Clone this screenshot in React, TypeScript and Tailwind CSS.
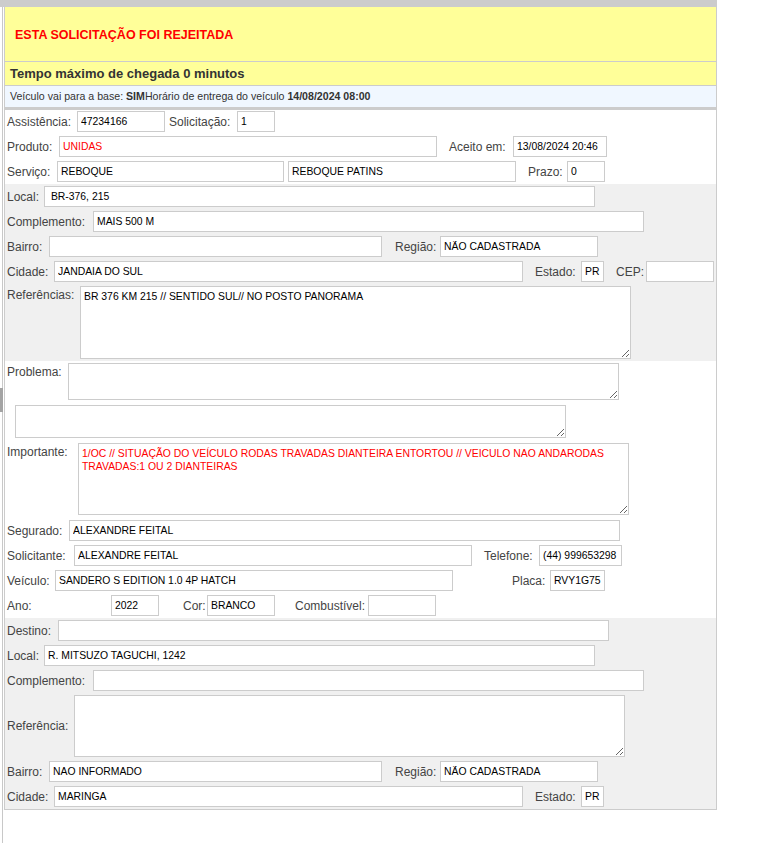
import React from 'react';

// campo de texto somente leitura, no estilo do formulário antigo
function Campo({ w, value = '', red = false }: { w: string; value?: string; red?: boolean }) {
  return (
    <input
      readOnly
      defaultValue={value}
      className={`${w} h-[21px] shrink-0 border border-[#cccccc] bg-white px-[3px] text-[10.4px] outline-none ${red ? 'text-[#ff0000]' : 'text-black'}`}
    />
  );
}

function Area({ w, h, value = '', red = false }: { w: string; h: string; value?: string; red?: boolean }) {
  return (
    <textarea
      readOnly
      defaultValue={value}
      className={`${w} ${h} shrink-0 border border-[#cccccc] bg-white px-[3px] pt-[3px] text-[10.4px] leading-[13px] outline-none ${red ? 'text-[#ff0000]' : 'text-black'}`}
    />
  );
}

function Rotulo({ w, children }: { w: string; children: React.ReactNode }) {
  return <span className={`${w} shrink-0 whitespace-nowrap text-[12px] text-[#444444]`}>{children}</span>;
}

export default function App() {
  return (
    <div className="relative flex min-h-screen flex-col bg-white font-['Liberation_Sans',Arial,sans-serif]">
      <div className="h-[7px] w-[717px] bg-[#cccccc]" />
      <div className="flex flex-1 items-start">
        <div className="flex w-[4px] self-stretch">
          <div className="ml-[2px] w-[1px] bg-[#c8c8c8]" />
        </div>
        <div className="absolute left-0 top-[388px] h-[24px] w-[3px] bg-[#a3a3a3]" />

        <div className="w-[713px] border-x border-b border-[#cccccc]">
          {/* aviso */}
          <div className="flex h-[55px] items-center border-b border-[#cccccc] bg-[#ffff99] pl-[10px] pt-[2px]">
            <span className="text-[12.5px] font-bold text-[#ff0000]">ESTA SOLICITAÇÃO FOI REJEITADA</span>
          </div>
          <div className="flex h-[24px] items-center border-b border-[#cccccc] bg-[#ffff99] pl-[5px]">
            <span className="text-[13px] font-bold text-[#333333]">Tempo máximo de chegada 0 minutos</span>
          </div>
          <div className="flex h-[24px] items-center border-b-[3px] border-[#cccccc] bg-[#f0f7ff] pl-[5px] text-[10.6px] text-[#333333]">
            <span>
              Veículo vai para a base: <b>SIM</b>Horário de entrega do veículo <b>14/08/2024 08:00</b>
            </span>
          </div>

          {/* dados da solicitação */}
          <div className="flex flex-col gap-[4px] pb-[2px] pl-[2px] pt-[1px]">
            <div className="flex h-[21px] items-center">
              <Rotulo w="w-[70px]">Assistência:</Rotulo>
              <Campo w="w-[88px]" value="47234166" />
              <Rotulo w="w-[72px] pl-[4px]">Solicitação:</Rotulo>
              <Campo w="w-[38px]" value="1" />
            </div>
            <div className="flex h-[21px] items-center">
              <Rotulo w="w-[52px]">Produto:</Rotulo>
              <Campo w="w-[378px]" value="UNIDAS" red />
              <Rotulo w="w-[76px] pl-[12px]">Aceito em:</Rotulo>
              <Campo w="w-[94px]" value="13/08/2024 20:46" />
            </div>
            <div className="flex h-[21px] items-center">
              <Rotulo w="w-[50px]">Serviço:</Rotulo>
              <Campo w="w-[227px]" value="REBOQUE" />
              <div className="w-[4px] shrink-0" />
              <Campo w="w-[228px]" value="REBOQUE PATINS" />
              <Rotulo w="w-[51px] pl-[12px]">Prazo:</Rotulo>
              <Campo w="w-[38px]" value="0" />
            </div>
          </div>

          {/* origem */}
          <div className="flex flex-col gap-[4px] bg-[#f0f0f0] py-[2px] pl-[2px]">
            <div className="flex h-[21px] items-center">
              <Rotulo w="w-[37px]">Local:</Rotulo>
              <Campo w="w-[551px]" value=" BR-376, 215" />
            </div>
            <div className="flex h-[21px] items-center">
              <Rotulo w="w-[86px]">Complemento:</Rotulo>
              <Campo w="w-[551px]" value="MAIS 500 M" />
            </div>
            <div className="flex h-[21px] items-center">
              <Rotulo w="w-[42px]">Bairro:</Rotulo>
              <Campo w="w-[333px]" />
              <Rotulo w="w-[58px] pl-[13px]">Região:</Rotulo>
              <Campo w="w-[158px]" value="NÃO CADASTRADA" />
            </div>
            <div className="flex h-[21px] items-center">
              <Rotulo w="w-[47px]">Cidade:</Rotulo>
              <Campo w="w-[469px]" value="JANDAIA DO SUL" />
              <Rotulo w="w-[58px] pl-[12px]">Estado:</Rotulo>
              <Campo w="w-[23px]" value="PR" />
              <Rotulo w="w-[42px] pl-[12px]">CEP:</Rotulo>
              <Campo w="w-[68px]" />
            </div>
            <div className="flex h-[73px] items-start">
              <Rotulo w="w-[73px]">Referências:</Rotulo>
              <Area w="w-[551px]" h="h-[73px]" value="BR 376 KM 215 // SENTIDO SUL// NO POSTO PANORAMA" />
            </div>
          </div>

          {/* problema / segurado / veículo */}
          <div className="flex flex-col gap-[4px] pb-[2px] pl-[2px] pt-[2px]">
            <div className="flex h-[38px] items-start">
              <Rotulo w="w-[61px]">Problema:</Rotulo>
              <Area w="w-[551px]" h="h-[37px]" />
            </div>
            <div className="flex h-[34px] items-start pl-[8px]">
              <Area w="w-[551px]" h="h-[33px]" />
            </div>
            <div className="flex h-[73px] items-start">
              <Rotulo w="w-[71px]">Importante:</Rotulo>
              <Area
                w="w-[551px]"
                h="h-[72px]"
                red
                value={'1/OC // SITUAÇÃO DO VEÍCULO RODAS TRAVADAS DIANTEIRA ENTORTOU // VEICULO NAO ANDARODAS\nTRAVADAS:1 OU 2 DIANTEIRAS'}
              />
            </div>
            <div className="flex h-[21px] items-center">
              <Rotulo w="w-[62px]">Segurado:</Rotulo>
              <Campo w="w-[551px]" value="ALEXANDRE FEITAL" />
            </div>
            <div className="flex h-[21px] items-center">
              <Rotulo w="w-[67px]">Solicitante:</Rotulo>
              <Campo w="w-[398px]" value="ALEXANDRE FEITAL" />
              <Rotulo w="w-[67px] pl-[12px]">Telefone:</Rotulo>
              <Campo w="w-[83px]" value="(44) 999653298" />
            </div>
            <div className="flex h-[21px] items-center">
              <Rotulo w="w-[48px]">Veículo:</Rotulo>
              <Campo w="w-[398px]" value="SANDERO S EDITION 1.0 4P HATCH" />
              <Rotulo w="w-[97px] pl-[59px]">Placa:</Rotulo>
              <Campo w="w-[55px]" value="RVY1G75" />
            </div>
            <div className="flex h-[21px] items-center">
              <Rotulo w="w-[104px]">Ano:</Rotulo>
              <Campo w="w-[48px]" value="2022" />
              <Rotulo w="w-[48px] pl-[24px]">Cor:</Rotulo>
              <Campo w="w-[68px]" value="BRANCO" />
              <Rotulo w="w-[93px] pl-[20px]">Combustível:</Rotulo>
              <Campo w="w-[68px]" />
            </div>
          </div>

          {/* destino */}
          <div className="flex flex-col gap-[4px] bg-[#f0f0f0] py-[2px] pl-[2px]">
            <div className="flex h-[21px] items-center">
              <Rotulo w="w-[51px]">Destino:</Rotulo>
              <Campo w="w-[551px]" />
            </div>
            <div className="flex h-[21px] items-center">
              <Rotulo w="w-[37px]">Local:</Rotulo>
              <Campo w="w-[551px]" value="R. MITSUZO TAGUCHI, 1242" />
            </div>
            <div className="flex h-[21px] items-center">
              <Rotulo w="w-[86px]">Complemento:</Rotulo>
              <Campo w="w-[551px]" />
            </div>
            <div className="flex h-[62px] items-center">
              <Rotulo w="w-[67px]">Referência:</Rotulo>
              <Area w="w-[551px]" h="h-[62px]" />
            </div>
            <div className="flex h-[21px] items-center">
              <Rotulo w="w-[42px]">Bairro:</Rotulo>
              <Campo w="w-[333px]" value="NAO INFORMADO" />
              <Rotulo w="w-[58px] pl-[13px]">Região:</Rotulo>
              <Campo w="w-[158px]" value="NÃO CADASTRADA" />
            </div>
            <div className="flex h-[21px] items-center">
              <Rotulo w="w-[47px]">Cidade:</Rotulo>
              <Campo w="w-[469px]" value="MARINGA" />
              <Rotulo w="w-[58px] pl-[12px]">Estado:</Rotulo>
              <Campo w="w-[23px]" value="PR" />
            </div>
          </div>
        </div>
      </div>
    </div>
  );
}
